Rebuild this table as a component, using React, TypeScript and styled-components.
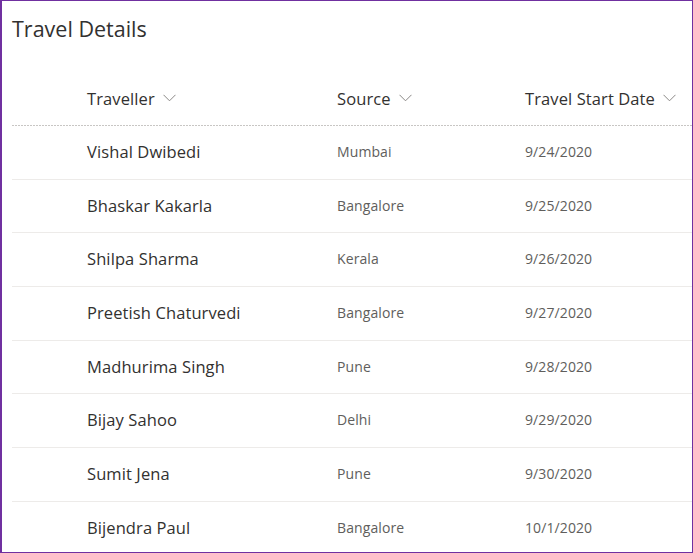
import React from "react";
import styled, { createGlobalStyle } from "styled-components";

type Trip = { name: string; source: string; date: string };

const trips: Trip[] = [
  { name: "Vishal Dwibedi", source: "Mumbai", date: "9/24/2020" },
  { name: "Bhaskar Kakarla", source: "Bangalore", date: "9/25/2020" },
  { name: "Shilpa Sharma", source: "Kerala", date: "9/26/2020" },
  { name: "Preetish Chaturvedi", source: "Bangalore", date: "9/27/2020" },
  { name: "Madhurima Singh", source: "Pune", date: "9/28/2020" },
  { name: "Bijay Sahoo", source: "Delhi", date: "9/29/2020" },
  { name: "Sumit Jena", source: "Pune", date: "9/30/2020" },
  { name: "Bijendra Paul", source: "Bangalore", date: "10/1/2020" },
];

const GlobalStyle = createGlobalStyle`
  html, body {
    margin: 0;
    padding: 0;
    background: #ffffff;
  }
  body {
    font-family: "Open Sans", "Noto Sans", sans-serif;
    color: #323130;
  }
`;

const Frame = styled.div`
  box-sizing: border-box;
  width: 693px;
  height: 553px;
  overflow: hidden;
  border: 1px solid #7030a0;
  border-left-width: 2px;
  padding: 0 0 0 10px;
  display: flex;
  flex-direction: column;
`;

const Title = styled.h2`
  margin: 0;
  padding: 13px 0 0 0;
  height: 58px;
  flex-shrink: 0;
  box-sizing: border-box;
  font-size: 21.5px;
  font-weight: 500;
  color: #323130;
`;

const Columns = "75px 250px 188px 1fr";

const HeaderRow = styled.div`
  display: grid;
  grid-template-columns: ${Columns};
  align-items: center;
  height: 67px;
  flex-shrink: 0;
  padding-top: 11px;
  box-sizing: border-box;
  background-image: repeating-linear-gradient(
    to right,
    #c8c6c4 0 2px,
    transparent 2px 3px
  );
  background-size: 100% 1px;
  background-repeat: no-repeat;
  background-position: bottom left;
`;

const HeaderCell = styled.div<{ $col: number }>`
  grid-column: ${({ $col }) => $col};
  display: flex;
  align-items: center;
  gap: 8px;
  font-size: 16.5px;
  letter-spacing: 0.1px;
  color: #323130;
  white-space: nowrap;
`;

const Chevron = () => (
  <svg width="13" height="8" viewBox="0 0 13 8" fill="none">
    <path d="M0.5 0.8 L6.5 6.8 L12.5 0.8" stroke="#8a8886" strokeWidth="1" />
  </svg>
);

const Row = styled.div`
  display: grid;
  grid-template-columns: ${Columns};
  align-items: center;
  height: 53.7px;
  flex-shrink: 0;
  padding-bottom: 2px;
  box-sizing: border-box;
  border-bottom: 1px solid #edebe9;
  &:last-child {
    border-bottom: none;
  }
`;

const Cell = styled.div<{ $col: number; $primary?: boolean }>`
  grid-column: ${({ $col }) => $col};
  font-size: ${({ $primary }) => ($primary ? "16.5px" : "14px")};
  color: ${({ $primary }) => ($primary ? "#323130" : "#605e5c")};
  letter-spacing: 0.1px;
  white-space: nowrap;
`;

export default function App() {
  return (
    <>
      <GlobalStyle />
      <Frame>
        <Title>Travel Details</Title>
        <HeaderRow>
          <HeaderCell $col={2}>
            Traveller <Chevron />
          </HeaderCell>
          <HeaderCell $col={3}>
            Source <Chevron />
          </HeaderCell>
          <HeaderCell $col={4}>
            Travel Start Date <Chevron />
          </HeaderCell>
        </HeaderRow>
        {trips.map((t) => (
          <Row key={t.name}>
            <Cell $col={2} $primary>
              {t.name}
            </Cell>
            <Cell $col={3}>{t.source}</Cell>
            <Cell $col={4}>{t.date}</Cell>
          </Row>
        ))}
      </Frame>
    </>
  );
}
